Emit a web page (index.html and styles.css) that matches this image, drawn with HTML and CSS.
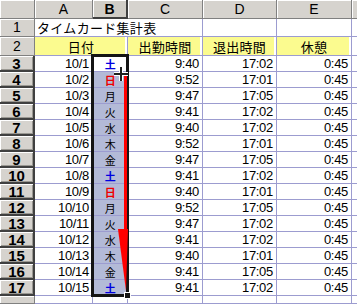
FILE: index.html
```html
<!DOCTYPE html>
<html lang="ja">
<head>
<meta charset="utf-8">
<title>タイムカード集計表</title>
<link rel="stylesheet" href="styles.css">
</head>
<body>
<div class="sheet">
  <!-- column headers -->
  <div class="corner"></div>
  <div class="ch">A</div>
  <div class="ch sel">B</div>
  <div class="ch">C</div>
  <div class="ch">D</div>
  <div class="ch">E</div>
  <div class="ch edge"></div>

  <!-- row 1 -->
  <div class="rh">1</div>
  <div class="c title">タイムカード集計表</div>
  <div class="c"></div>
  <div class="c"></div>
  <div class="c edge"></div>

  <!-- row 2 -->
  <div class="rh">2</div>
  <div class="c head span2">日付</div>
  <div class="c head">出勤時間</div>
  <div class="c head">退出時間</div>
  <div class="c head">休憩</div>
  <div class="c edge"></div>

  <div class="rh on">3</div><div class="c r">10/1</div><div class="c day active sat">土</div><div class="c r">9:40</div><div class="c r">17:02</div><div class="c r">0:45</div><div class="c edge"></div>
  <div class="rh on">4</div><div class="c r">10/2</div><div class="c day sun">日</div><div class="c r">9:52</div><div class="c r">17:01</div><div class="c r">0:45</div><div class="c edge"></div>
  <div class="rh on">5</div><div class="c r">10/3</div><div class="c day">月</div><div class="c r">9:47</div><div class="c r">17:05</div><div class="c r">0:45</div><div class="c edge"></div>
  <div class="rh on">6</div><div class="c r">10/4</div><div class="c day">火</div><div class="c r">9:41</div><div class="c r">17:02</div><div class="c r">0:45</div><div class="c edge"></div>
  <div class="rh on">7</div><div class="c r">10/5</div><div class="c day">水</div><div class="c r">9:40</div><div class="c r">17:02</div><div class="c r">0:45</div><div class="c edge"></div>
  <div class="rh on">8</div><div class="c r">10/6</div><div class="c day">木</div><div class="c r">9:52</div><div class="c r">17:01</div><div class="c r">0:45</div><div class="c edge"></div>
  <div class="rh on">9</div><div class="c r">10/7</div><div class="c day">金</div><div class="c r">9:47</div><div class="c r">17:05</div><div class="c r">0:45</div><div class="c edge"></div>
  <div class="rh on">10</div><div class="c r">10/8</div><div class="c day sat">土</div><div class="c r">9:41</div><div class="c r">17:02</div><div class="c r">0:45</div><div class="c edge"></div>
  <div class="rh on">11</div><div class="c r">10/9</div><div class="c day sun">日</div><div class="c r">9:40</div><div class="c r">17:01</div><div class="c r">0:45</div><div class="c edge"></div>
  <div class="rh on">12</div><div class="c r">10/10</div><div class="c day">月</div><div class="c r">9:52</div><div class="c r">17:05</div><div class="c r">0:45</div><div class="c edge"></div>
  <div class="rh on">13</div><div class="c r">10/11</div><div class="c day">火</div><div class="c r">9:47</div><div class="c r">17:02</div><div class="c r">0:45</div><div class="c edge"></div>
  <div class="rh on">14</div><div class="c r">10/12</div><div class="c day">水</div><div class="c r">9:41</div><div class="c r">17:02</div><div class="c r">0:45</div><div class="c edge"></div>
  <div class="rh on">15</div><div class="c r">10/13</div><div class="c day">木</div><div class="c r">9:40</div><div class="c r">17:01</div><div class="c r">0:45</div><div class="c edge"></div>
  <div class="rh on">16</div><div class="c r">10/14</div><div class="c day">金</div><div class="c r">9:41</div><div class="c r">17:05</div><div class="c r">0:45</div><div class="c edge"></div>
  <div class="rh on">17</div><div class="c r">10/15</div><div class="c day sat">土</div><div class="c r">9:41</div><div class="c r">17:02</div><div class="c r">0:45</div><div class="c edge"></div>

  <!-- row 18, cut off at the window edge -->
  <div class="rh"></div><div class="c"></div><div class="c"></div><div class="c"></div><div class="c"></div><div class="c"></div><div class="c edge"></div>

  <!-- selection frame over B3:B17 with its fill handle -->
  <div class="selframe"><span class="handle"></span></div>

  <!-- drag annotation and cursor -->
  <svg class="drag" width="40" height="240" viewBox="0 0 40 240">
    <rect x="23" y="8" width="3" height="160" fill="#ff0000"/>
    <polygon points="17,162 27,162 25,224" fill="#ff0000"/>
    <g class="cross">
      <path d="M20 0 V14 M13 7 H27" stroke="#ffffff" stroke-width="4"/>
      <path d="M20 0 V14 M13 7 H27" stroke="#202020" stroke-width="2"/>
    </g>
  </svg>
</div>
</body>
</html>
```

FILE: styles.css
```css
html, body {
  margin: 0;
  padding: 0;
  background: #ffffff;
}

.sheet {
  position: relative;
  display: grid;
  grid-template-columns: 35px 58px 35px 75px 74px 75px 5px;
  grid-template-rows: 19px 18px 19px repeat(15, 16px) 8px;
  width: 357px;
  height: 304px;
  overflow: hidden;
  font-family: "Liberation Sans", "Noto Sans CJK JP", sans-serif;
  font-size: 13px;
  line-height: 15px;
  color: #000000;
}

/* header strip */
.corner,
.ch,
.rh {
  box-sizing: border-box;
  background: #d6d3ce;
  display: flex;
  align-items: center;
  justify-content: center;
  border-right: 1px solid #808080;
  border-bottom: 1px solid #808080;
  box-shadow: inset 1px 1px 0 #ffffff;
  overflow: hidden;
}

.ch {
  font-size: 14px;
  padding-top: 1px;
}

.ch.sel {
  font-weight: bold;
  background: #d0cdc6;
  border-right: 2px solid #404040;
  border-bottom: 2px solid #404040;
}

.ch.edge {
  border-right: none;
}

.rh {
  font-size: 14px;
}

.rh.on {
  font-weight: bold;
  font-size: 15px;
  border-right: 2px solid #404040;
  border-bottom: 2px solid #404040;
  box-shadow: inset 1px 1px 0 #ffffff, inset -1px -1px 0 #9a9892;
}

/* cells */
.c {
  box-sizing: border-box;
  border-right: 1px solid #9c9cd0;
  border-bottom: 1px solid #9c9cd0;
  display: flex;
  align-items: center;
  white-space: nowrap;
  padding: 0 3px;
  letter-spacing: -0.3px;
  overflow: hidden;
}

.c.r {
  justify-content: flex-end;
}

.c.edge {
  border-right: none;
}

.title {
  grid-column: span 3;
  font-family: "Noto Sans CJK JP", sans-serif;
  font-size: 13px;
  letter-spacing: 0.3px;
  padding-left: 2px;
}

.head {
  justify-content: center;
  background: #fbfb8f;
  box-shadow: inset -2px 0 0 #ffffff;
  font-family: "Noto Sans CJK JP", sans-serif;
  font-size: 13px;
  letter-spacing: 0.3px;
  padding-top: 1px;
}

.span2 {
  grid-column: span 2;
}

.day {
  justify-content: center;
  background: #b3bad7;
  font-family: "Noto Sans CJK JP", sans-serif;
  font-size: 11px;
  line-height: 14px;
  overflow: visible;
}

.day.active {
  background: #ffffff;
}

.sat {
  color: #0000e0;
  font-weight: bold;
}

.sun {
  color: #ee0000;
  font-weight: bold;
}

/* selection frame over B3:B17 */
.selframe {
  position: absolute;
  left: 91px;
  top: 54px;
  width: 38px;
  height: 243px;
  box-sizing: border-box;
  border: 3px solid #141414;
  pointer-events: none;
}

.handle {
  position: absolute;
  right: -5px;
  bottom: -5px;
  width: 5px;
  height: 5px;
  background: #141414;
  border: 1px solid #ffffff;
}

.drag {
  position: absolute;
  left: 101px;
  top: 67px;
}
```
